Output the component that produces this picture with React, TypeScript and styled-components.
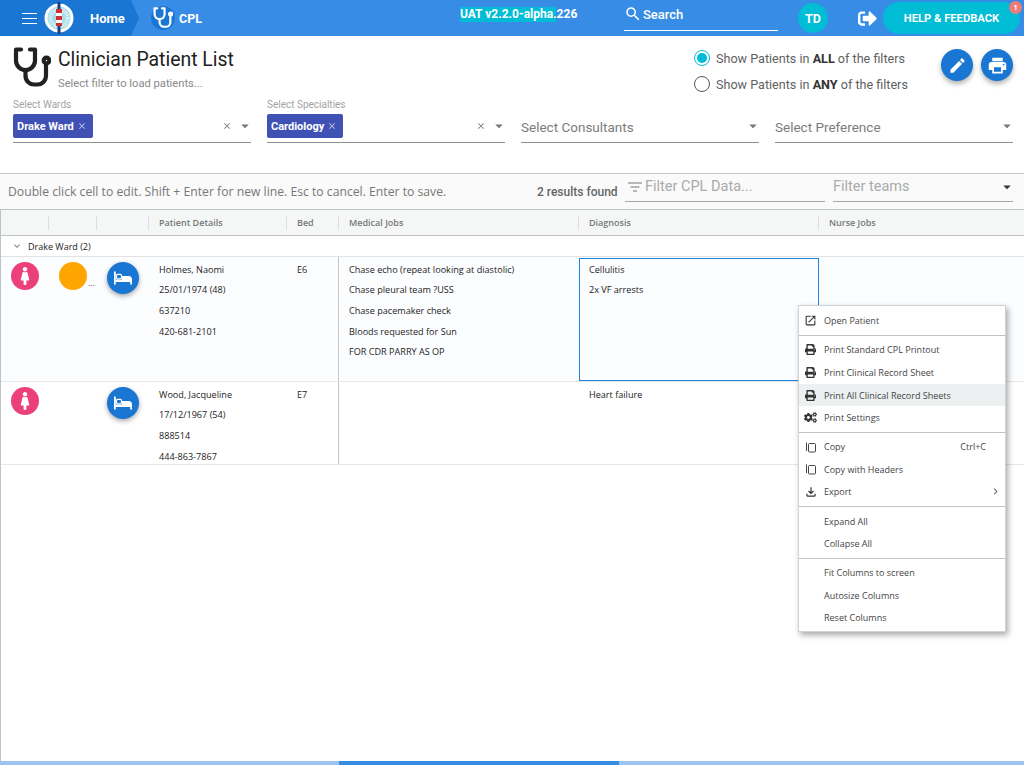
import React from "react";
import styled, { createGlobalStyle } from "styled-components";
import {
  MdEdit,
  MdPrint,
  MdSearch,
  MdClose,
  MdArrowDropDown,
  MdOpenInNew,
  MdExpandMore,
  MdChevronRight,
  MdOutlineFileDownload,
} from "react-icons/md";
import { FaFemale, FaPrint, FaCogs, FaSignOutAlt } from "react-icons/fa";

const GlobalStyle = createGlobalStyle`
  html, body { margin: 0; padding: 0; height: 100%; overflow: hidden; background: #fff; }
  body { font-family: Roboto, "Liberation Sans", sans-serif; }
  #root { height: 768px; }
  * { box-sizing: border-box; }
`;

const Page = styled.div`
  position: relative;
  width: 1024px;
  height: 768px;
  display: flex;
  flex-direction: column;
`;

/* top bar */
const TopBar = styled.header`
  height: 36px;
  flex: none;
  display: flex;
  align-items: center;
  background: #378de6;
  color: #fff;
`;
const HomeCrumb = styled.div`
  width: 139px;
  height: 36px;
  flex: none;
  display: flex;
  align-items: center;
  padding-left: 22px;
  background: #1976d2;
  clip-path: polygon(0 0, 131px 0, 139px 18px, 131px 36px, 0 36px);
`;
const BurgerIcon = styled.svg`
  width: 15px;
  height: 11px;
  flex: none;
`;
const LogoWrap = styled.svg`
  width: 30px;
  height: 34px;
  margin-left: 7px;
  flex: none;
`;
const HomeLabel = styled.span`
  margin-left: 16px;
  font-size: 13px;
  font-weight: 700;
`;
const CplCrumb = styled.div`
  display: flex;
  align-items: center;
  width: 321px;
  flex: none;
  padding-left: 12px;
`;
const CplIcon = styled.div`
  width: 24px;
  height: 24px;
  border-radius: 50%;
  background: #1976d2;
  display: flex;
  align-items: center;
  justify-content: center;
`;
const CplLabel = styled.span`
  margin-left: 4px;
  font-size: 12.5px;
  font-weight: 700;
`;
const Version = styled.div`
  width: 96px;
  flex: none;
  height: 15px;
  margin-top: -8px;
  background: #00bcd4;
  font-size: 12px;
  line-height: 15px;
  font-weight: 700;
  white-space: nowrap;
  text-align: center;
`;
const SearchBox = styled.div`
  width: 154px;
  height: 27px;
  margin-left: 68px;
  margin-top: -2px;
  padding-bottom: 5px;
  flex: none;
  display: flex;
  align-items: center;
  gap: 1px;
  border-bottom: 1px solid #fff;
  font-size: 13px;
  font-weight: 500;
`;
const UserBadge = styled.div`
  width: 30px;
  height: 30px;
  flex: none;
  margin-left: 20px;
  border-radius: 50%;
  background: #00bcd4;
  font-size: 12.5px;
  font-weight: 700;
  display: flex;
  align-items: center;
  justify-content: center;
`;
const LogoutWrap = styled.div`
  margin-left: 30px;
  width: 25px;
  flex: none;
  display: flex;
  align-items: center;
`;
const HelpButton = styled.div`
  position: relative;
  width: 137px;
  height: 32px;
  flex: none;
  border-radius: 16px;
  background: #00bcd4;
  font-size: 11.2px;
  font-weight: 700;
  display: flex;
  align-items: center;
  justify-content: center;
`;
const HelpBadge = styled.span`
  position: absolute;
  right: -2px;
  top: -1px;
  width: 13px;
  height: 13px;
  border-radius: 50%;
  background: #ee7a7a;
  font-size: 8px;
  line-height: 13px;
  text-align: center;
`;

/* heading area */
const Heading = styled.section`
  height: 137px;
  flex: none;
  display: flex;
  flex-direction: column;
  padding: 11px 11px 0 13px;
`;
const HeadingTop = styled.div`
  height: 52px;
  display: flex;
`;
const TitleBlock = styled.div`
  margin-left: 7px;
  width: 636px;
  flex: none;
`;
const Title = styled.h1`
  margin: 0;
  font-size: 19.4px;
  line-height: 26px;
  font-weight: 400;
  color: #212121;
`;
const Subtitle = styled.div`
  margin-top: 4px;
  font-size: 11.2px;
  line-height: 14px;
  color: #8a8a8a;
`;
const RadioGroup = styled.div`
  width: 247px;
  flex: none;
  margin-top: 3px;
  display: flex;
  flex-direction: column;
  gap: 10px;
`;
const RadioRow = styled.div`
  height: 16px;
  display: flex;
  align-items: center;
  gap: 6px;
  font-size: 12.6px;
  color: #5f5f5f;
  b { color: #333; font-weight: 700; }
`;
const RadioDot = styled.span<{ $on?: boolean }>`
  width: 16px;
  height: 16px;
  flex: none;
  border-radius: 50%;
  border: 1px solid ${(p) => (p.$on ? "#00bcd4" : "#555")};
  display: flex;
  align-items: center;
  justify-content: center;
  &::after {
    content: "";
    width: 10px;
    height: 10px;
    border-radius: 50%;
    background: ${(p) => (p.$on ? "#00bcd4" : "transparent")};
  }
`;
const FabGroup = styled.div`
  display: flex;
  gap: 8px;
  margin-top: 2px;
`;
const Fab = styled.div`
  width: 32px;
  height: 32px;
  border-radius: 50%;
  background: #1976d2;
  color: #fff;
  display: flex;
  align-items: center;
  justify-content: center;
  box-shadow: 0 3px 5px rgba(0, 0, 0, 0.3);
`;
const Filters = styled.div`
  display: grid;
  grid-template-columns: repeat(4, 238px);
  column-gap: 16px;
`;
const FilterField = styled.div`
  display: flex;
  flex-direction: column;
  height: 44px;
`;
const FilterLabel = styled.div`
  height: 12px;
  font-size: 10px;
  line-height: 12px;
  color: #a3a3a3;
`;
const FilterControl = styled.div`
  margin-top: 3px;
  height: 29px;
  display: flex;
  align-items: flex-start;
  border-bottom: 1px solid #8f8f8f;
  color: #777;
`;
const Chip = styled.div`
  height: 24px;
  padding: 0 6px 0 4px;
  border-radius: 2px;
  background: #3f51b5;
  color: #fff;
  font-size: 11px;
  font-weight: 700;
  display: flex;
  align-items: center;
  gap: 3px;
`;
const Placeholder = styled.div`
  height: 24px;
  line-height: 26px;
  font-size: 13.5px;
  color: #7c7c7c;
`;
const ControlEnd = styled.div`
  margin-left: auto;
  height: 24px;
  display: flex;
  align-items: center;
  gap: 4px;
  margin-right: -3px;
`;

/* grid toolbar */
const Toolbar = styled.div`
  height: 36px;
  flex: none;
  display: flex;
  align-items: center;
  padding-left: 8px;
  border-top: 1px solid #c4c8ca;
  background: #fafafa;
`;
const HintText = styled.div`
  width: 529px;
  flex: none;
  font-family: "Open Sans", sans-serif;
  font-size: 12.2px;
  color: #777;
  white-space: nowrap;
`;
const ResultCount = styled.div`
  width: 88px;
  flex: none;
  font-size: 12px;
  font-weight: 500;
  color: #666;
`;
const ToolbarInput = styled.div<{ $w: number; $ml: number }>`
  width: ${(p) => p.$w}px;
  margin-left: ${(p) => p.$ml}px;
  height: 27px;
  align-self: flex-start;
  margin-top: 1px;
  padding-bottom: 3px;
  flex: none;
  display: flex;
  align-items: center;
  gap: 2px;
  border-bottom: 1px solid #a8a8a8;
  font-size: 14.5px;
  color: #aaa;
`;
const FilterLines = styled.svg`
  width: 16px;
  height: 10px;
  margin-left: 2px;
  flex: none;
`;

/* ag grid */
const GridShell = styled.div`
  flex: 1;
  min-height: 0;
  display: flex;
  flex-direction: column;
  border-left: 1px solid #bdc3c7;
`;
const cols = "48px 48px 52px 138px 52px 240px 240px 206px";
const HeaderRow = styled.div`
  height: 27px;
  flex: none;
  display: grid;
  grid-template-columns: ${cols};
  background: #f5f7f7;
  border-top: 1px solid #bdc3c7;
  border-bottom: 1px solid #bdc3c7;
`;
const HeaderCell = styled.div`
  display: flex;
  align-items: center;
  padding-left: 10px;
  font-family: "Open Sans", sans-serif;
  font-size: 9px;
  font-weight: 600;
  color: #777;
  position: relative;
  &::after {
    content: "";
    position: absolute;
    right: 0;
    top: 6px;
    height: 14px;
    width: 1px;
    background: #dde0e1;
  }
  &:last-child::after { display: none; }
`;
const GroupRow = styled.div`
  height: 21px;
  flex: none;
  display: flex;
  align-items: center;
  padding-left: 10px;
  gap: 5px;
  font-family: "Open Sans", sans-serif;
  font-size: 9px;
  color: #222;
  border-bottom: 1px solid #e2e2e2;
`;
const DataRow = styled.div<{ $h: number; $hover?: boolean }>`
  height: ${(p) => p.$h}px;
  flex: none;
  display: grid;
  grid-template-columns: ${cols};
  background: ${(p) => (p.$hover ? "#fcfdff" : "#fff")};
  border-bottom: 1px solid #e6e7e8;
`;
const IconCell = styled.div`
  position: relative;
  padding: 5px 0 0 10px;
`;
const RoundIcon = styled.div<{ $bg: string; $size: number; $raised?: boolean }>`
  width: ${(p) => p.$size}px;
  height: ${(p) => p.$size}px;
  border-radius: 50%;
  background: ${(p) => p.$bg};
  color: #fff;
  display: flex;
  align-items: center;
  justify-content: center;
  box-shadow: ${(p) => (p.$raised ? "0 2px 5px rgba(0,0,0,.35)" : "none")};
`;
const Ellipsis = styled.span`
  position: absolute;
  left: 39px;
  top: 21px;
  font-size: 9px;
  line-height: 10px;
  color: #222;
`;
const TextCell = styled.div<{ $divider?: boolean }>`
  min-height: 0;
  overflow: hidden;
  padding: 2.5px 10px 0;
  font-family: "Open Sans", sans-serif;
  font-size: 9.1px;
  line-height: 20.7px;
  color: #222;
  white-space: nowrap;
  border-right: ${(p) => (p.$divider ? "1px solid #c4c6c8" : "none")};
`;
const SelectedCell = styled(TextCell)`
  margin-top: 1px;
  padding: 0.5px 9px 0;
  border: 1px solid #1b84dc;
`;
const Line = styled.div``;
const Scrollbar = styled.div`
  height: 4px;
  margin-bottom: 3px;
  flex: none;
  display: grid;
  grid-template-columns: 339px 280px 1fr;
  background: #9dc4ee;
`;
const ScrollThumb = styled.div`
  grid-column: 2;
  background: #378de6;
`;

/* context menu */
const Menu = styled.div`
  position: absolute;
  left: 798px;
  top: 305px;
  width: 208px;
  height: 327px;
  padding: 3.5px 0;
  background: #fff;
  border: 1px solid #d0d3d5;
  box-shadow: 2px 3px 6px rgba(0, 0, 0, 0.35);
  font-family: "Open Sans", sans-serif;
  font-size: 9px;
  color: #444;
`;
const MenuItem = styled.div<{ $active?: boolean }>`
  height: 22.6px;
  display: flex;
  align-items: center;
  background: ${(p) => (p.$active ? "#ecf0f1" : "transparent")};
`;
const MenuIcon = styled.span`
  width: 25px;
  flex: none;
  display: flex;
  justify-content: center;
  padding-right: 2px;
  color: #333;
`;
const MenuShortcut = styled.span`
  margin-left: auto;
  margin-right: 19px;
`;
const MenuArrow = styled.span`
  margin-left: auto;
  margin-right: 3px;
  display: flex;
`;
const MenuSeparator = styled.div`
  height: 1px;
  margin: 3px 0 2.5px;
  background: #bdc3c7;
`;

const Stethoscope = ({ size, color }: { size: number; color: string }) => (
  <svg width={size} height={(size * 40) / 38} viewBox="0 0 38 40" fill="none" stroke={color} strokeWidth="4.2" strokeLinecap="round" strokeLinejoin="round">
    <path d="M8 2.500H3v11a9.500 9.500 0 0 0 19 0v-11h-5" />
    <path d="M12.500 23v6a8.500 8.500 0 0 0 8.500 8.500h3.500a8.500 8.500 0 0 0 8.500-8.500V18" />
    <circle cx="33.500" cy="13.500" r="2.800" />
  </svg>
);

const BedGlyph = () => (
  <svg width="20" height="20" viewBox="0 0 20 20">
    <rect x="1" y="3.500" width="1.800" height="13" fill="#fff" />
    <rect x="3.500" y="6.300" width="5" height="4.500" rx="1.200" fill="none" stroke="#fff" strokeWidth="1.200" />
    <path d="M2.500 11.500H9V8h6.500A3.500 3.500 0 0 1 19 11.500v5h-1.800V14H2.500z" fill="#fff" />
  </svg>
);

const CopyIcon = () => (
  <svg width="12" height="12" viewBox="0 0 12 12" fill="none" stroke="#444" strokeWidth="1">
    <rect x="3.500" y="2.500" width="7" height="8.500" rx="1" />
    <path d="M1.500 10V1.500" />
  </svg>
);

const Logo = () => (
  <LogoWrap viewBox="0 0 30 34">
    <circle cx="15" cy="17" r="14.500" fill="#fff" />
    <circle cx="15" cy="17" r="11.500" fill="#a5dcea" />
    <circle cx="15" cy="17" r="8.500" fill="none" stroke="#e4f5f9" strokeWidth="4" strokeDasharray="1 1" />
    <rect x="13.500" y="1" width="3" height="32" fill="#1c3f80" />
    <rect x="12" y="8" width="6" height="4" fill="#d32f2f" />
    <rect x="12" y="12" width="6" height="3" fill="#fff" />
    <rect x="12" y="15" width="6" height="4" fill="#d32f2f" />
    <rect x="12" y="19" width="6" height="3" fill="#fff" />
    <rect x="12" y="22" width="6" height="3" fill="#d32f2f" />
  </LogoWrap>
);

const BedButton = () => (
  <RoundIcon $bg="#1976d2" $size={32} $raised>
    <BedGlyph />
  </RoundIcon>
);

const FemaleBadge = () => (
  <RoundIcon $bg="#ec407a" $size={28}>
    <FaFemale size={18} />
  </RoundIcon>
);

const columns = ["", "", "", "Patient Details", "Bed", "Medical Jobs", "Diagnosis", "Nurse Jobs"];

export default function App() {
  return (
    <Page>
      <GlobalStyle />
      <TopBar>
        <HomeCrumb>
          <BurgerIcon viewBox="0 0 15 11">
            <path d="M0 .5h15M0 5.500h15M0 10.500h15" stroke="#fff" strokeWidth="1" />
          </BurgerIcon>
          <Logo />
          <HomeLabel>Home</HomeLabel>
        </HomeCrumb>
        <CplCrumb>
          <CplIcon>
            <Stethoscope size={20} color="#fff" />
          </CplIcon>
          <CplLabel>CPL</CplLabel>
        </CplCrumb>
        <Version>UAT v2.2.0-alpha.226</Version>
        <SearchBox>
          <MdSearch size={18} />
          Search
        </SearchBox>
        <UserBadge>TD</UserBadge>
        <LogoutWrap>
          <FaSignOutAlt size={19} />
        </LogoutWrap>
        <HelpButton>
          HELP &amp; FEEDBACK
          <HelpBadge>1</HelpBadge>
        </HelpButton>
      </TopBar>

      <Heading>
        <HeadingTop>
          <Stethoscope size={38} color="#212121" />
          <TitleBlock>
            <Title>Clinician Patient List</Title>
            <Subtitle>Select filter to load patients...</Subtitle>
          </TitleBlock>
          <RadioGroup>
            <RadioRow>
              <RadioDot $on />
              <span>
                Show Patients in <b>ALL</b> of the filters
              </span>
            </RadioRow>
            <RadioRow>
              <RadioDot />
              <span>
                Show Patients in <b>ANY</b> of the filters
              </span>
            </RadioRow>
          </RadioGroup>
          <FabGroup>
            <Fab>
              <MdEdit size={19} />
            </Fab>
            <Fab>
              <MdPrint size={21} />
            </Fab>
          </FabGroup>
        </HeadingTop>
        <Filters>
          <FilterField>
            <FilterLabel>Select Wards</FilterLabel>
            <FilterControl>
              <Chip>
                Drake Ward <MdClose size={10} color="#c5cae9" />
              </Chip>
              <ControlEnd>
                <MdClose size={10} />
                <MdArrowDropDown size={18} />
              </ControlEnd>
            </FilterControl>
          </FilterField>
          <FilterField>
            <FilterLabel>Select Specialties</FilterLabel>
            <FilterControl>
              <Chip>
                Cardiology <MdClose size={10} color="#c5cae9" />
              </Chip>
              <ControlEnd>
                <MdClose size={10} />
                <MdArrowDropDown size={18} />
              </ControlEnd>
            </FilterControl>
          </FilterField>
          <FilterField>
            <FilterLabel />
            <FilterControl>
              <Placeholder>Select Consultants</Placeholder>
              <ControlEnd>
                <MdArrowDropDown size={18} />
              </ControlEnd>
            </FilterControl>
          </FilterField>
          <FilterField>
            <FilterLabel />
            <FilterControl>
              <Placeholder>Select Preference</Placeholder>
              <ControlEnd>
                <MdArrowDropDown size={18} />
              </ControlEnd>
            </FilterControl>
          </FilterField>
        </Filters>
      </Heading>

      <Toolbar>
        <HintText>Double click cell to edit. Shift + Enter for new line. Esc to cancel. Enter to save.</HintText>
        <ResultCount>2 results found</ResultCount>
        <ToolbarInput $w={200} $ml={0}>
          <FilterLines viewBox="0 0 16 10">
            <path d="M1 1h14M3.500 5h9M6 9h4" stroke="#777" strokeWidth="1" />
          </FilterLines>
          Filter CPL Data...
        </ToolbarInput>
        <ToolbarInput $w={180} $ml={8}>
          Filter teams
          <ControlEnd>
            <MdArrowDropDown size={18} color="#333" />
          </ControlEnd>
        </ToolbarInput>
      </Toolbar>

      <GridShell>
        <HeaderRow>
          {columns.map((c, i) => (
            <HeaderCell key={i}>{c}</HeaderCell>
          ))}
        </HeaderRow>
        <GroupRow>
          <MdExpandMore size={12} color="#888" />
          Drake Ward (2)
        </GroupRow>
        <DataRow $h={125} $hover>
          <IconCell>
            <FemaleBadge />
          </IconCell>
          <IconCell>
            <RoundIcon $bg="#ffa500" $size={28} />
            <Ellipsis>...</Ellipsis>
          </IconCell>
          <IconCell>
            <BedButton />
          </IconCell>
          <TextCell>
            <Line>Holmes, Naomi</Line>
            <Line>25/01/1974 (48)</Line>
            <Line>637210</Line>
            <Line>420-681-2101</Line>
          </TextCell>
          <TextCell $divider>E6</TextCell>
          <TextCell>
            <Line>Chase echo (repeat looking at diastolic)</Line>
            <Line>Chase pleural team ?USS</Line>
            <Line>Chase pacemaker check</Line>
            <Line>Bloods requested for Sun</Line>
            <Line>FOR CDR PARRY AS OP</Line>
          </TextCell>
          <SelectedCell>
            <Line>Cellulitis</Line>
            <Line>2x VF arrests</Line>
          </SelectedCell>
          <TextCell />
        </DataRow>
        <DataRow $h={83}>
          <IconCell>
            <FemaleBadge />
          </IconCell>
          <IconCell />
          <IconCell>
            <BedButton />
          </IconCell>
          <TextCell>
            <Line>Wood, Jacqueline</Line>
            <Line>17/12/1967 (54)</Line>
            <Line>888514</Line>
            <Line>444-863-7867</Line>
          </TextCell>
          <TextCell $divider>E7</TextCell>
          <TextCell />
          <TextCell>
            <Line>Heart failure</Line>
          </TextCell>
          <TextCell />
        </DataRow>
      </GridShell>
      <Scrollbar>
        <ScrollThumb />
      </Scrollbar>

      <Menu>
        <MenuItem>
          <MenuIcon>
            <MdOpenInNew size={13} />
          </MenuIcon>
          Open Patient
        </MenuItem>
        <MenuSeparator />
        <MenuItem>
          <MenuIcon>
            <FaPrint size={11} />
          </MenuIcon>
          Print Standard CPL Printout
        </MenuItem>
        <MenuItem>
          <MenuIcon>
            <FaPrint size={11} />
          </MenuIcon>
          Print Clinical Record Sheet
        </MenuItem>
        <MenuItem $active>
          <MenuIcon>
            <FaPrint size={11} />
          </MenuIcon>
          Print All Clinical Record Sheets
        </MenuItem>
        <MenuItem>
          <MenuIcon>
            <FaCogs size={13} />
          </MenuIcon>
          Print Settings
        </MenuItem>
        <MenuSeparator />
        <MenuItem>
          <MenuIcon>
            <CopyIcon />
          </MenuIcon>
          Copy
          <MenuShortcut>Ctrl+C</MenuShortcut>
        </MenuItem>
        <MenuItem>
          <MenuIcon>
            <CopyIcon />
          </MenuIcon>
          Copy with Headers
        </MenuItem>
        <MenuItem>
          <MenuIcon>
            <MdOutlineFileDownload size={14} />
          </MenuIcon>
          Export
          <MenuArrow>
            <MdChevronRight size={13} color="#777" />
          </MenuArrow>
        </MenuItem>
        <MenuSeparator />
        <MenuItem>
          <MenuIcon />
          Expand All
        </MenuItem>
        <MenuItem>
          <MenuIcon />
          Collapse All
        </MenuItem>
        <MenuSeparator />
        <MenuItem>
          <MenuIcon />
          Fit Columns to screen
        </MenuItem>
        <MenuItem>
          <MenuIcon />
          Autosize Columns
        </MenuItem>
        <MenuItem>
          <MenuIcon />
          Reset Columns
        </MenuItem>
      </Menu>
    </Page>
  );
}
